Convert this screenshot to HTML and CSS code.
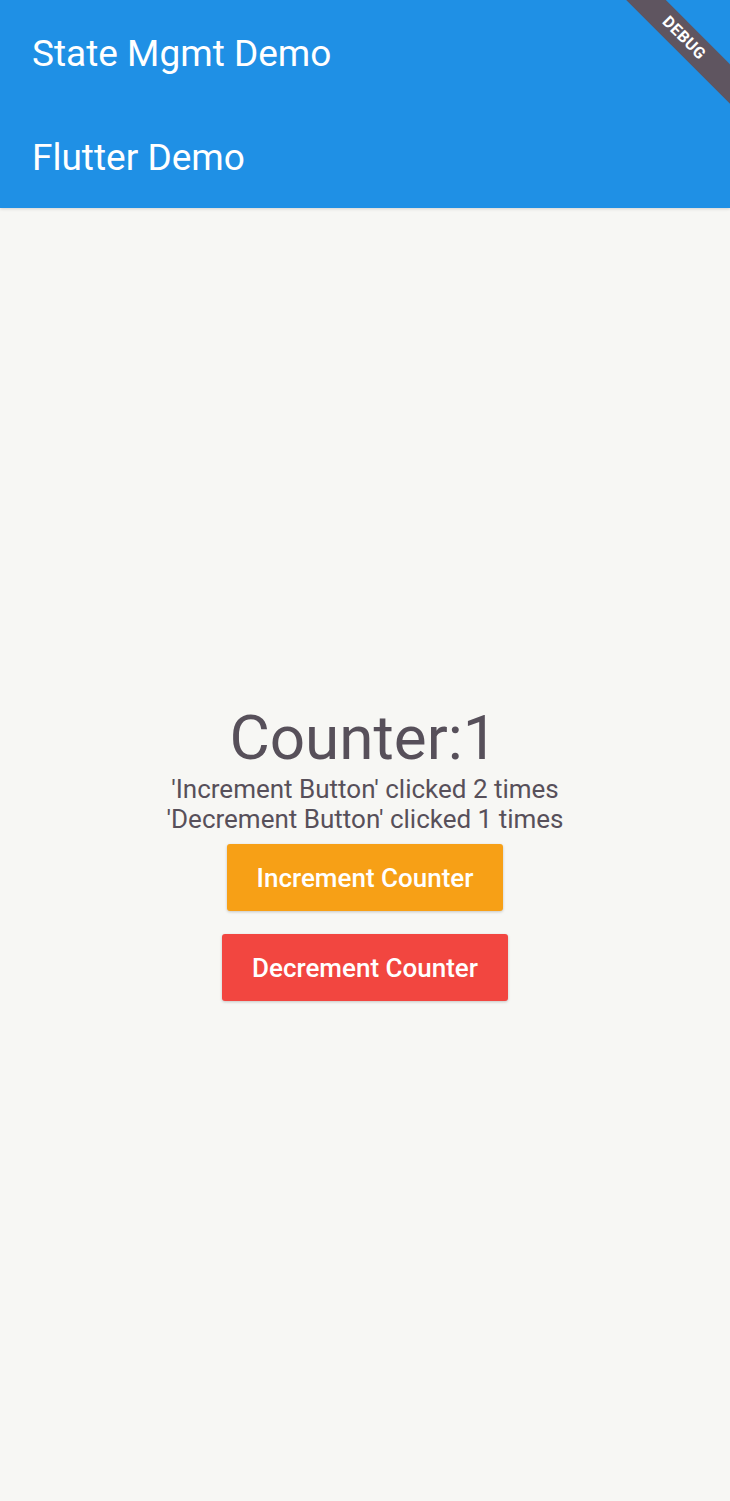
FILE: index.html
```html
<!DOCTYPE html>
<html>
<head>
<meta charset="utf-8">
<link rel="stylesheet" href="styles.css">
</head>
<body>
<header class="appbar">
  <div class="bar-row bar-title">State Mgmt Demo</div>
  <div class="bar-row bar-sub">Flutter Demo</div>
  <div class="debug"><span>DEBUG</span></div>
</header>
<main class="content">
  <div class="column">
    <div class="counter">Counter:1</div>
    <div class="info">'Increment Button' clicked 2 times</div>
    <div class="info">'Decrement Button' clicked 1 times</div>
    <button class="btn btn-inc">Increment Counter</button>
    <button class="btn btn-dec">Decrement Counter</button>
  </div>
</main>
</body>
</html>
```

FILE: styles.css
```css
html, body {
  margin: 0;
  padding: 0;
}
body {
  width: 730px;
  height: 1501px;
  overflow: hidden;
  background: #f7f7f4;
  font-family: Roboto, "Noto Sans", sans-serif;
  display: flex;
  flex-direction: column;
}
.appbar {
  position: relative;
  background: #1f90e5;
  color: #ffffff;
  height: 208px;
  overflow: hidden;
  box-shadow: 0 1px 3px rgba(0,0,0,0.15);
}
.bar-row {
  padding-left: 32px;
  font-size: 37px;
  display: flex;
  align-items: center;
}
.bar-title {
  height: 106px;
}
.bar-sub {
  height: 102px;
}
.debug {
  position: absolute;
  top: 0;
  right: 0;
  width: 120px;
  height: 120px;
  overflow: hidden;
}
.debug span {
  position: absolute;
  top: 24px;
  right: -54px;
  width: 200px;
  height: 28px;
  line-height: 28px;
  background: #5f5560;
  color: #ffffff;
  font-size: 16px;
  font-weight: 700;
  text-align: center;
  transform: rotate(45deg);
  letter-spacing: 0.5px;
}
.content {
  flex: 1;
  display: flex;
  align-items: center;
  justify-content: center;
  padding-bottom: 6px;
}
.column {
  display: flex;
  flex-direction: column;
  align-items: center;
  color: #57505a;
}
.counter {
  font-size: 62px;
  line-height: 72px;
  margin-right: 3px;
}
.info {
  font-size: 26px;
  line-height: 30px;
}
.btn {
  border: none;
  border-radius: 3px;
  color: #ffffff;
  font-family: Roboto, "Noto Sans", sans-serif;
  font-size: 26px;
  font-weight: 500;
  height: 67px;
  padding: 0 30px;
  box-shadow: 0 1px 3px rgba(0,0,0,0.2);
}
.btn-inc {
  background: #f7a016;
  margin-top: 10px;
}
.btn-dec {
  background: #f24640;
  margin-top: 23px;
}
```
